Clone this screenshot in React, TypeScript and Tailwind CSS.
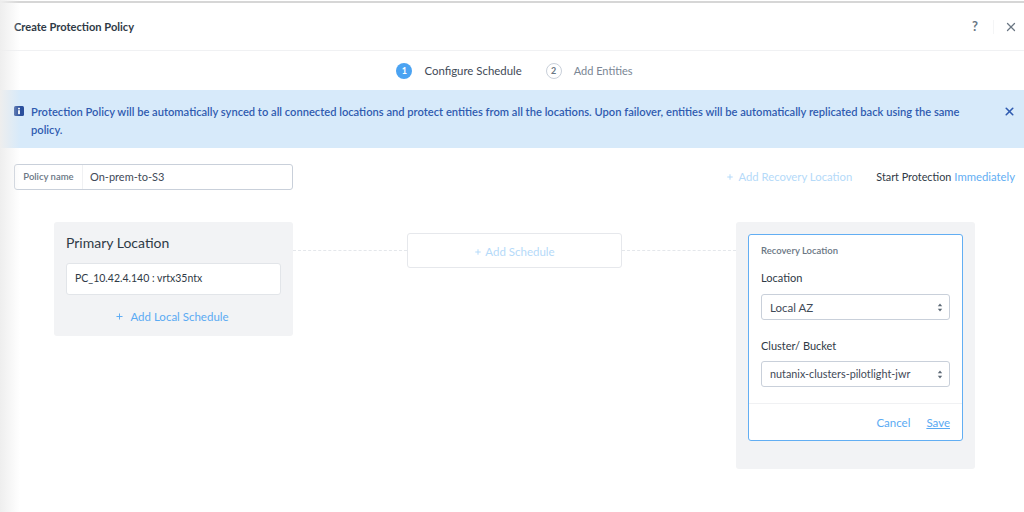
import React from 'react';
import { X, Plus } from 'lucide-react';

function SelectBox({ value, small }: { value: string; small?: boolean }) {
  return (
    <div className="flex h-[26px] items-center justify-between rounded-[3px] border border-[#c9d0da] bg-white pl-[8px] pr-[6px] text-[#3f4a57]">
      <span className={small ? 'text-[10.8px]' : 'text-[11.5px]'}>{value}</span>
      <svg width="6" height="9" viewBox="0 0 6 9" className="fill-[#5c6875]">
        <path d="M3 0.5 L5.2 3.3 H0.8 Z" />
        <path d="M3 8.5 L5.2 5.7 H0.8 Z" />
      </svg>
    </div>
  );
}

function DashedLine() {
  return <div className="mt-[28px] h-0 flex-1 border-t border-dashed border-[#e4e7eb]" />;
}

export default function App() {
  return (
    <div className="relative h-[512px] w-[1024px] overflow-hidden bg-white font-['Lato',sans-serif] text-[#2f3a46]">
      <div className="pointer-events-none absolute bottom-0 left-0 top-0 w-[20px] bg-gradient-to-r from-[#eeeeee] to-transparent" />

      <div className="h-[3px] border-b-2 border-[#d6d6d6]" />

      {/* header */}
      <div className="flex h-[48px] items-center justify-between border-b border-[#f0f1f3] pl-[14px] pr-[6px]">
        <h1 className="pt-[2px] text-[11.1px] font-bold text-[#2f3a46]">Create Protection Policy</h1>
        <div className="flex items-center text-[#6a7683]">
          <span className="w-[22px] text-center text-[13px] font-bold">?</span>
          <div className="ml-[7px] mr-[10px] h-[14px] w-px bg-[#f4f5f6]" />
          <X size={14} strokeWidth={2.2} />
        </div>
      </div>

      {/* stepper */}
      <div className="flex h-[39px] items-center justify-center gap-[24px] pl-[5px] pt-[1px]">
        <div className="flex items-center gap-[12px]">
          <span className="flex h-4 w-4 items-center justify-center rounded-full bg-[#4ba3f2] text-[9px] font-bold text-white">1</span>
          <span className="text-[11.4px] text-[#3f4a57]">Configure Schedule</span>
        </div>
        <div className="flex items-center gap-[12px]">
          <span className="flex h-4 w-4 items-center justify-center rounded-full border border-[#c9d0da] text-[9px] font-bold text-[#6a7683]">2</span>
          <span className="text-[11px] text-[#7a8694]">Add Entities</span>
        </div>
      </div>

      {/* banner */}
      <div className="flex h-[58px] items-start gap-[7px] bg-[#d7eafa] pl-[14px] pr-[8px] pt-[13px]">
        <svg width="10" height="10" viewBox="0 0 10 10" className="mt-[3px] shrink-0">
          <rect width="10" height="10" rx="1.5" className="fill-[#2a4f9c]" />
          <rect x="4.1" y="1.8" width="1.8" height="1.6" className="fill-white" />
          <rect x="4.1" y="4.2" width="1.8" height="4" className="fill-white" />
        </svg>
        <p className="flex-1 pr-[36px] text-[11.15px] font-semibold leading-[18px] text-[#2f5bb0]">
          Protection Policy will be automatically synced to all connected locations and protect entities from all the locations. Upon failover, entities will be automatically replicated back using the same policy.
        </p>
        <X size={13} strokeWidth={3} className="mt-[2px] text-[#2f5bb0]" />
      </div>

      {/* policy row */}
      <div className="mt-4 flex items-center justify-between pl-[14px] pr-[9px]">
        <div className="flex h-[26px] w-[279px] items-center rounded-[3px] border border-[#c9d0da]">
          <span className="flex h-full w-[68px] items-center justify-center border-r border-[#f0f1f3] text-[9.5px] font-semibold text-[#6a7683]">Policy name</span>
          <span className="pl-[7px] text-[11px] text-[#3f4a57]">On-prem-to-S3</span>
        </div>
        <div className="flex items-center">
          <Plus size={8} strokeWidth={3} className="text-[#b5daf9]" />
          <span className="ml-[4px] text-[11.3px] text-[#b5daf9]">Add Recovery Location</span>
          <span className="ml-[24px] text-[10.8px] text-[#2f3a46]">Start Protection</span>
          <span className="ml-[3px] text-[11.3px] text-[#62aef3]">Immediately</span>
        </div>
      </div>

      {/* canvas */}
      <div className="mt-[32px] flex items-start pl-[54px] pr-[49px]">
        <section className="h-[114px] w-[239px] rounded-[3px] bg-[#f2f3f5] px-[12px] pt-[12px]">
          <h2 className="text-[14px] leading-[17px] text-[#2f3a46]">Primary Location</h2>
          <div className="mt-[12px] flex h-[32px] items-center rounded-[3px] border border-[#e2e5e9] bg-white pl-[8px] text-[10.5px] text-[#2f3a46]">PC_10.42.4.140 : vrtx35ntx</div>
          <div className="mt-[13px] flex items-center justify-center pr-[3px] text-[11.5px] text-[#5aaaf3]">
            <Plus size={9} strokeWidth={2.5} className="mr-[6px]" />
            Add Local Schedule
          </div>
        </section>

        <DashedLine />

        <div className="mt-[11px] flex h-[35px] w-[215px] items-center justify-center rounded-[3px] border border-[#e6e8ec] pt-[2px] text-[11.5px] text-[#b5daf9]">
          <Plus size={8} strokeWidth={3} className="mr-[3px]" />
          Add Schedule
        </div>

        <DashedLine />

        <section className="h-[247px] w-[239px] rounded-[3px] bg-[#f2f3f5] px-[12px] pt-[12px]">
          <div className="h-[207px] rounded-[3px] border border-[#62aef3] bg-white">
            <div className="px-[12px] pt-[9px]">
              <div className="text-[9.5px] font-semibold text-[#6a7683]">Recovery Location</div>
              <div className="mt-[13px] text-[11px] leading-[14px] text-[#2f3a46]">Location</div>
              <div className="mt-[9px]"><SelectBox value="Local AZ" /></div>
              <div className="mt-[19px] text-[11px] leading-[14px] text-[#2f3a46]">Cluster/ Bucket</div>
              <div className="mt-[8px]"><SelectBox value="nutanix-clusters-pilotlight-jwr" small /></div>
            </div>
            <div className="mt-[16px] flex h-[37px] items-center justify-end gap-[16px] border-t border-[#f0f1f3] pr-[12px] pt-[1px] text-[11.5px] text-[#5aaaf3]">
              <span>Cancel</span>
              <span className="underline">Save</span>
            </div>
          </div>
        </section>
      </div>
    </div>
  );
}
